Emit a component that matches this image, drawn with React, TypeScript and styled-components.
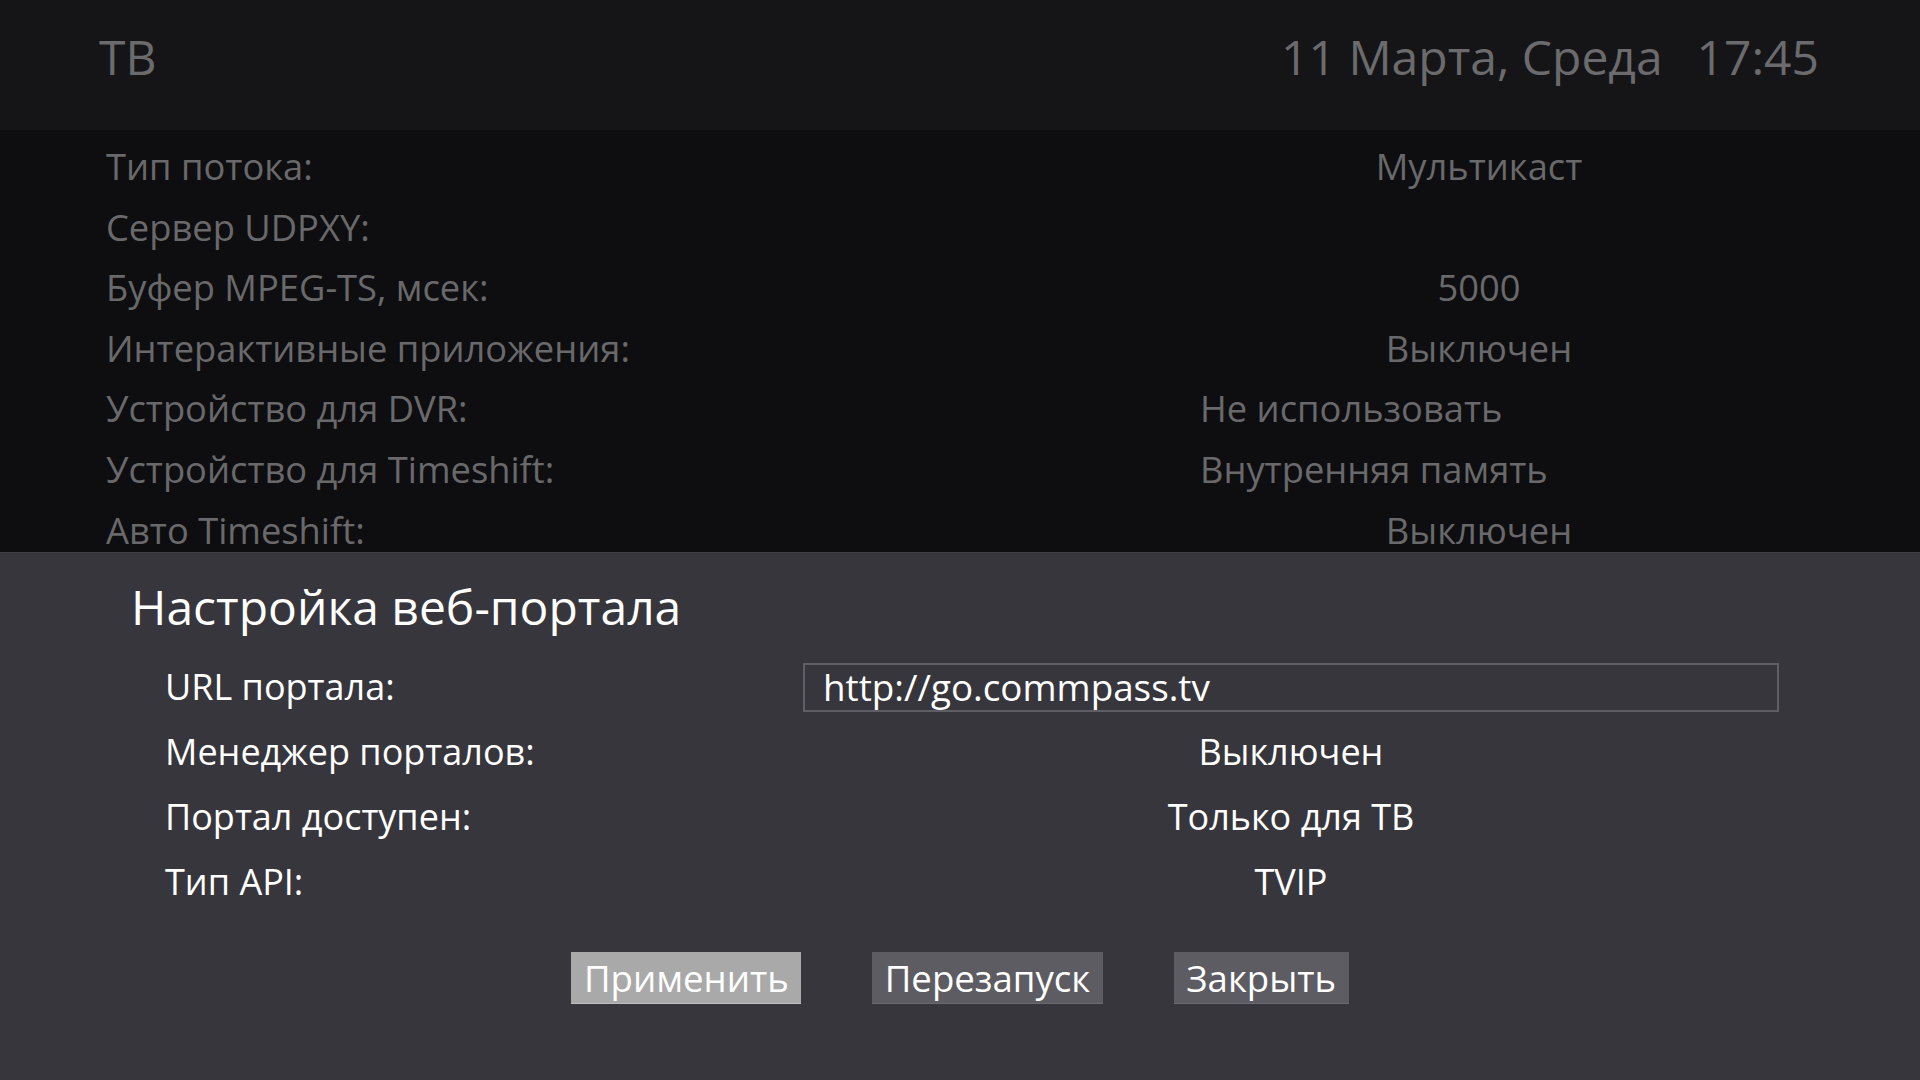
import React from 'react';
import styled, { createGlobalStyle } from 'styled-components';

const GlobalStyle = createGlobalStyle`
  html, body {
    margin: 0;
    padding: 0;
    width: 1920px;
    height: 1080px;
    overflow: hidden;
    background: #0e0e10;
  }
  * {
    box-sizing: border-box;
  }
`;

const Screen = styled.div`
  width: 1920px;
  height: 1080px;
  display: flex;
  flex-direction: column;
  font-family: 'Open Sans', 'Noto Sans', sans-serif;
  overflow: hidden;
`;

const Header = styled.header`
  height: 130px;
  flex: none;
  display: flex;
  justify-content: space-between;
  align-items: flex-start;
  padding: 24px 101px 0 99px;
  background: #151517;
  color: #6b6b6d;
  font-size: 48px;
  line-height: 65px;
`;

const Clock = styled.div`
  display: flex;
  gap: 34px;
`;

const SettingsList = styled.div`
  height: 422px;
  flex: none;
  display: flex;
  flex-direction: column;
  gap: 16.6px;
  padding: 14px 0 0 106px;
  background: #0e0e10;
`;

const SettingRow = styled.div`
  height: 44px;
  flex: none;
  display: flex;
  align-items: center;
  color: #69696b;
  font-size: 36.3px;
  line-height: 44px;
  white-space: nowrap;
`;

const SettingLabel = styled.div`
  width: 1094px;
  flex: none;
`;

type ValueProps = {
  $left?: boolean;
};

const SettingValue = styled.div<ValueProps>`
  width: 558px;
  flex: none;
  text-align: ${(p) => (p.$left ? 'left' : 'center')};
`;

const Dialog = styled.section`
  flex: 1;
  display: flex;
  flex-direction: column;
  padding: 21px 0 0 0;
  border-top: 1px solid #403f45;
  background: #37363c;
  color: #ffffff;
`;

const DialogTitle = styled.h2`
  margin: 0 0 15px 0;
  padding-left: 131px;
  font-size: 48px;
  font-weight: 400;
  line-height: 65px;
`;

const Form = styled.div`
  display: flex;
  flex-direction: column;
  padding-left: 165px;
`;

const FormRow = styled.div`
  height: 65px;
  display: flex;
  align-items: flex-start;
  font-size: 36px;
  line-height: 65px;
`;

const FormLabel = styled.div`
  width: 638px;
  flex: none;
`;

const FormValue = styled.div`
  width: 976px;
  flex: none;
  text-align: center;
`;

const UrlField = styled.div`
  width: 976px;
  height: 49px;
  margin-top: 9px;
  flex: none;
  padding-left: 18px;
  border: 2px solid #5f5e64;
  font-size: 36.8px;
  line-height: 45px;
`;

const Buttons = styled.div`
  display: flex;
  justify-content: center;
  gap: 71px;
  margin-top: 38px;
`;

type ButtonProps = {
  $focused?: boolean;
};

const Button = styled.div<ButtonProps>`
  height: 52px;
  padding: 0 12.5px;
  display: flex;
  align-items: center;
  background: ${(p) => (p.$focused ? '#a9a9a9' : '#5d5c62')};
  border-bottom: 1px solid ${(p) => (p.$focused ? '#bdbdbd' : '#6a696f')};
  color: #ffffff;
  font-size: 36.6px;
  line-height: 52px;
`;

const settings = [
  { label: 'Тип потока:', value: 'Мультикаст' },
  { label: 'Сервер UDPXY:', value: '' },
  { label: 'Буфер MPEG-TS, мсек:', value: '5000' },
  { label: 'Интерактивные приложения:', value: 'Выключен' },
  { label: 'Устройство для DVR:', value: 'Не использовать', left: true },
  { label: 'Устройство для Timeshift:', value: 'Внутренняя память', left: true },
  { label: 'Авто Timeshift:', value: 'Выключен' },
];

const portal = [
  { label: 'Менеджер порталов:', value: 'Выключен' },
  { label: 'Портал доступен:', value: 'Только для ТВ' },
  { label: 'Тип API:', value: 'TVIP' },
];

const App: React.FC = () => (
  <>
    <GlobalStyle />
    <Screen>
      <Header>
        <div>ТВ</div>
        <Clock>
          <span>11 Марта, Среда</span>
          <span>17:45</span>
        </Clock>
      </Header>
      <SettingsList>
        {settings.map((s) => (
          <SettingRow key={s.label}>
            <SettingLabel>{s.label}</SettingLabel>
            <SettingValue $left={s.left}>{s.value}</SettingValue>
          </SettingRow>
        ))}
      </SettingsList>
      <Dialog>
        <DialogTitle>Настройка веб-портала</DialogTitle>
        <Form>
          <FormRow>
            <FormLabel>URL портала:</FormLabel>
            <UrlField>http://go.commpass.tv</UrlField>
          </FormRow>
          {portal.map((p) => (
            <FormRow key={p.label}>
              <FormLabel>{p.label}</FormLabel>
              <FormValue>{p.value}</FormValue>
            </FormRow>
          ))}
        </Form>
        <Buttons>
          <Button $focused>Применить</Button>
          <Button>Перезапуск</Button>
          <Button>Закрыть</Button>
        </Buttons>
      </Dialog>
    </Screen>
  </>
);

export default App;
